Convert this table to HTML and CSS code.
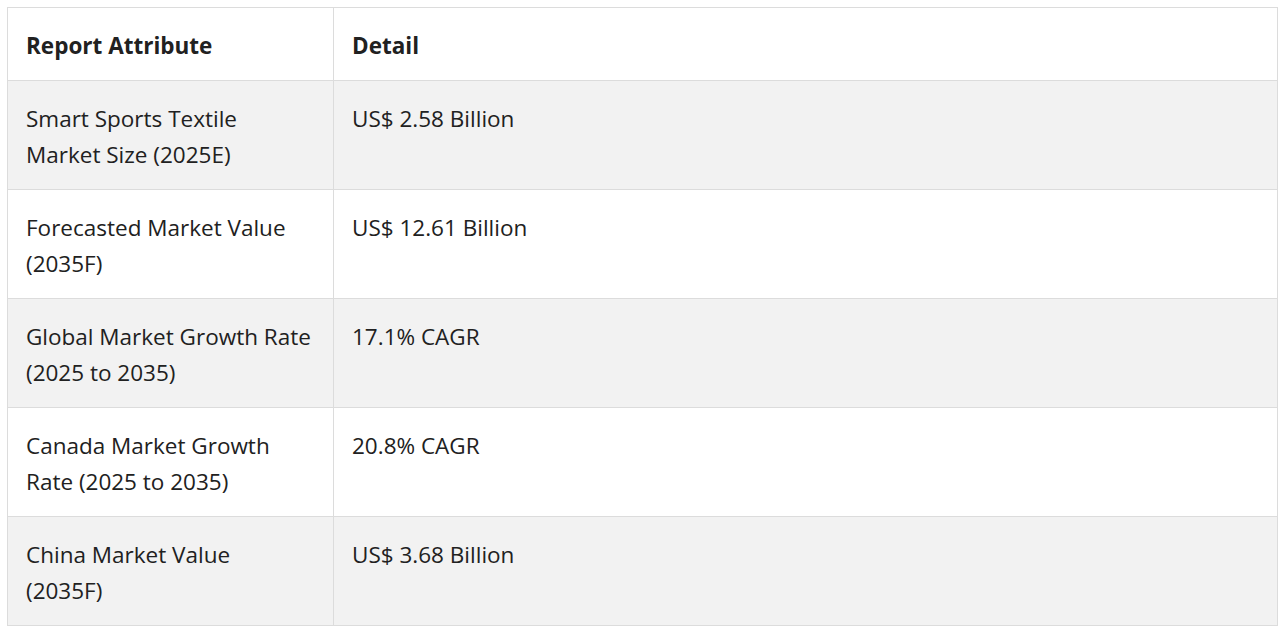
FILE: index.html
```html
<!DOCTYPE html>
<html lang="en">
<head>
<meta charset="utf-8">
<title>Report Attributes</title>
<link rel="stylesheet" href="styles.css">
</head>
<body>
<div class="wrap">
<table class="report">
<thead>
<tr><th class="col-attr">Report Attribute</th><th>Detail</th></tr>
</thead>
<tbody>
<tr><td>Smart Sports Textile<br>Market Size (2025E)</td><td>US$ 2.58 Billion</td></tr>
<tr><td>Forecasted Market Value<br>(2035F)</td><td>US$ 12.61 Billion</td></tr>
<tr><td>Global Market Growth Rate<br>(2025 to 2035)</td><td>17.1% CAGR</td></tr>
<tr><td>Canada Market Growth<br>Rate (2025 to 2035)</td><td>20.8% CAGR</td></tr>
<tr><td>China Market Value<br>(2035F)</td><td>US$ 3.68 Billion</td></tr>
</tbody>
</table>
</div>
</body>
</html>
```
FILE: styles.css
```css
html, body {
  margin: 0;
  padding: 0;
  background: #ffffff;
}
.wrap {
  padding: 7px 0 0 7px;
}
.report {
  width: 1271px;
  border-collapse: collapse;
  font-family: "Open Sans", "Noto Sans", sans-serif;
  font-size: 22.5px;
  line-height: 36px;
  color: #212121;
  table-layout: fixed;
}
.report th, .report td {
  border: 1px solid #dcdcdc;
  padding: 20px 18px 16px 18px;
  text-align: left;
  vertical-align: top;
}
.report th {
  font-weight: 700;
}
.report tr > :first-child {
  padding-right: 13px;
}
.col-attr {
  width: 294px;
}
.report tbody tr:nth-child(odd) {
  background: #f2f2f2;
}
```
